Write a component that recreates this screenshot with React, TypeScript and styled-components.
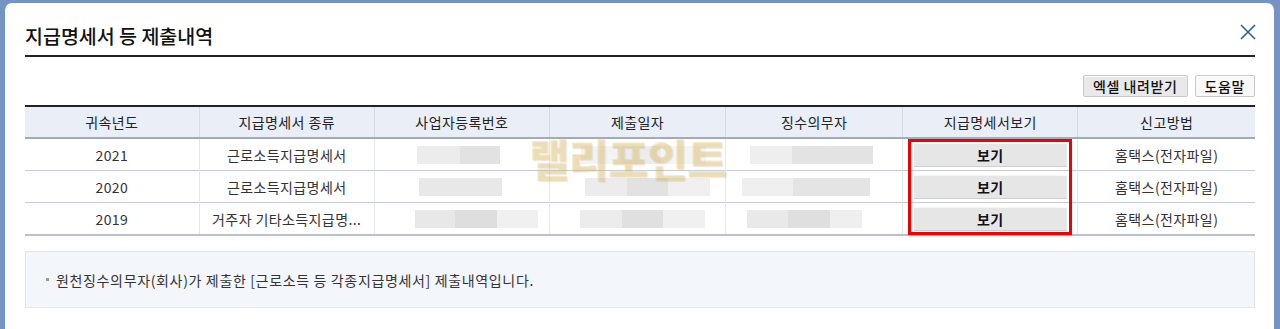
import React from "react";
import styled, { createGlobalStyle } from "styled-components";

const GlobalStyle = createGlobalStyle`
  html, body { margin: 0; padding: 0; }
  body {
    background: #7493c1;
    font-family: "Noto Sans CJK KR", "Noto Sans", sans-serif;
    color: #333;
    overflow: hidden;
  }
`;

const Dialog = styled.div`
  margin: 3px 6px 0 5px;
  background: #fff;
  border-radius: 7px 7px 0 0;
  padding: 0 19px 40px 20px;
  height: 400px;
  box-sizing: border-box;
`;

const Header = styled.div`
  display: flex;
  justify-content: space-between;
  align-items: flex-start;
  height: 52px;
  border-bottom: 2px solid #222;
  box-sizing: content-box;
`;

const Title = styled.h1`
  margin: 21px 0 0 0;
  font-size: 19.5px;
  line-height: 24px;
  font-weight: 500;
  color: #111;
  letter-spacing: 0;
`;

const CloseButton = styled.button`
  margin: 20px -1px 0 0;
  padding: 0;
  border: 0;
  background: transparent;
  width: 17px;
  height: 17px;
  display: flex;
  align-items: center;
  justify-content: center;
  cursor: pointer;
`;

const Toolbar = styled.div`
  display: flex;
  justify-content: flex-end;
  gap: 7px;
  margin: 18px 0 8px;
`;

const ToolButton = styled.button<{ $light?: boolean }>`
  height: 22px;
  padding: 0 9px;
  border: 1px solid #c9c9c9;
  background: ${(p) => (p.$light ? "#f9f9f9" : "#e9e9e9")};
  font-family: "Noto Sans CJK KR", sans-serif;
  font-size: 14px;
  font-weight: 500;
  letter-spacing: 0.6px;
  color: #111;
  line-height: 20px;
  border-radius: 2px;
  box-shadow: inset 0 1px 0 #fff;
`;

const TableWrap = styled.div`
  position: relative;
`;

const Table = styled.table`
  width: 100%;
  border-collapse: collapse;
  table-layout: fixed;
  border-top: 2px solid #222;
  border-bottom: 2px solid #b9c1cc;
`;

const Th = styled.th`
  height: 30px;
  padding: 0;
  background: #e9eef7;
  border-left: 1px solid #d4dbe6;
  border-bottom: 2px solid #a6abb3;
  font-size: 14px;
  letter-spacing: 0.4px;
  font-weight: 400;
  color: #222;
  text-align: center;
  &:first-child { border-left: 0; }
`;

const Td = styled.td`
  height: 31px;
  padding: 0;
  border-left: 1px solid #e6e8ec;
  border-top: 1px solid #c5ccd6;
  font-size: 14px;
  letter-spacing: 0.4px;
  color: #333;
  text-align: center;
  white-space: nowrap;
  overflow: hidden;
  &:first-child { border-left: 0; }
`;

const Redacted = styled.div<{ $offset: number }>`
  display: flex;
  height: 18px;
  margin-left: ${(p) => p.$offset}px;
`;

const Seg = styled.span<{ $w: number; $shade: string }>`
  display: block;
  width: ${(p) => p.$w}px;
  background: ${(p) => p.$shade};
`;

const ViewButton = styled.button`
  display: block;
  width: 153px;
  height: 24px;
  margin: 0 auto;
  padding: 0;
  border: 0;
  border-top: 1px solid #f6f6f6;
  border-bottom: 1px solid #cfcfcf;
  background: #e6e6e6;
  font-family: "Noto Sans CJK KR", sans-serif;
  font-size: 14px;
  font-weight: 700;
  letter-spacing: 0.5px;
  color: #111;
  line-height: 22px;
`;

const Highlight = styled.div`
  position: absolute;
  left: 883px;
  top: 34px;
  width: 164px;
  height: 96px;
  box-sizing: border-box;
  border: 3px solid #f20000;
  pointer-events: none;
`;

const Watermark = styled.div`
  position: absolute;
  left: 504px;
  top: 33px;
  font-size: 44px;
  line-height: 40px;
  font-weight: 900;
  letter-spacing: -1px;
  color: rgba(246, 196, 60, 0.3);
  text-shadow: 1px 1px 1px rgba(150, 150, 150, 0.22);
  pointer-events: none;
`;

const Notice = styled.div`
  margin-top: 15px;
  height: 57px;
  box-sizing: border-box;
  background: #f3f6fb;
  border: 1px solid #e2e7ef;
  display: flex;
  align-items: center;
  padding-left: 20px;
  gap: 7px;
  font-size: 14px;
  letter-spacing: 0.65px;
  color: #333;
`;

const Bullet = styled.span`
  width: 3px;
  height: 3px;
  background: #999;
  display: inline-block;
`;

type Seg3 = [number, string];
type Row = {
  year: string;
  kind: string;
  biz: { off: number; segs: Seg3[] };
  date: { off: number; segs: Seg3[] };
  payer: { off: number; segs: Seg3[] };
};

const rows: Row[] = [
  {
    year: "2021",
    kind: "근로소득지급명세서",
    biz: { off: 42, segs: [[43, "#ececec"], [40, "#e2e2e2"]] },
    date: { off: 31, segs: [[40, "#f3f3f3"], [40, "#ececec"], [45, "#f5f5f5"]] },
    payer: { off: 24, segs: [[42, "#eeeeee"], [81, "#e3e3e3"]] },
  },
  {
    year: "2020",
    kind: "근로소득지급명세서",
    biz: { off: 44, segs: [[83, "#e8e8e8"]] },
    date: { off: 35, segs: [[42, "#ececec"], [41, "#e2e2e2"], [42, "#f0f0f0"]] },
    payer: { off: 16, segs: [[51, "#efefef"], [77, "#e4e4e4"]] },
  },
  {
    year: "2019",
    kind: "거주자 기타소득지급명...",
    biz: { off: 40, segs: [[40, "#e8e8e8"], [42, "#dedede"], [41, "#f0f0f0"]] },
    date: { off: 30, segs: [[42, "#ececec"], [41, "#e0e0e0"], [42, "#f0f0f0"]] },
    payer: { off: 21, segs: [[41, "#e9e9e9"], [42, "#dfdfdf"], [32, "#efefef"]] },
  },
];

const Blocks = ({ off, segs }: { off: number; segs: Seg3[] }) => (
  <Redacted $offset={off}>
    {segs.map(([w, c], i) => (
      <Seg key={i} $w={w} $shade={c} />
    ))}
  </Redacted>
);

const cols = [174, 175, 175, 176, 177, 175, 177];

export default function App() {
  return (
    <>
      <GlobalStyle />
      <Dialog>
        <Header>
          <Title>지급명세서 등 제출내역</Title>
          <CloseButton aria-label="닫기">
            <svg width="16" height="16" viewBox="0 0 16 16">
              <path d="M1 1 L15 15 M15 1 L1 15" stroke="#2b60a6" strokeWidth="1.6" fill="none" />
            </svg>
          </CloseButton>
        </Header>
        <Toolbar>
          <ToolButton>엑셀 내려받기</ToolButton>
          <ToolButton $light>도움말</ToolButton>
        </Toolbar>
        <TableWrap>
          <Table>
            <colgroup>
              {cols.map((w, i) => (
                <col key={i} style={{ width: w }} />
              ))}
            </colgroup>
            <thead>
              <tr>
                <Th>귀속년도</Th>
                <Th>지급명세서 종류</Th>
                <Th>사업자등록번호</Th>
                <Th>제출일자</Th>
                <Th>징수의무자</Th>
                <Th>지급명세서보기</Th>
                <Th>신고방법</Th>
              </tr>
            </thead>
            <tbody>
              {rows.map((r) => (
                <tr key={r.year}>
                  <Td>{r.year}</Td>
                  <Td>{r.kind}</Td>
                  <Td>
                    <Blocks {...r.biz} />
                  </Td>
                  <Td>
                    <Blocks {...r.date} />
                  </Td>
                  <Td>
                    <Blocks {...r.payer} />
                  </Td>
                  <Td>
                    <ViewButton>보기</ViewButton>
                  </Td>
                  <Td>홈택스(전자파일)</Td>
                </tr>
              ))}
            </tbody>
          </Table>
          <Watermark>랠리포인트</Watermark>
          <Highlight />
        </TableWrap>
        <Notice>
          <Bullet />
          원천징수의무자(회사)가 제출한 [근로소득 등 각종지급명세서] 제출내역입니다.
        </Notice>
      </Dialog>
    </>
  );
}
